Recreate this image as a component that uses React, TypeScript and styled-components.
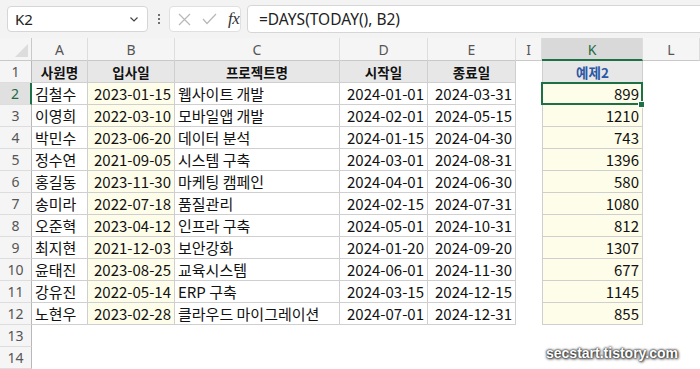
import React from "react";
import styled, { createGlobalStyle, css } from "styled-components";

const GlobalStyle = createGlobalStyle`
  html, body {
    margin: 0;
    padding: 0;
    background: #ffffff;
    overflow: hidden;
  }
  body {
    font-family: "Noto Sans CJK KR", "Noto Sans", sans-serif;
  }
`;

const KR = `"Noto Sans CJK KR", "Noto Sans", sans-serif`;
const UI = `"Noto Sans", "Noto Sans CJK KR", sans-serif`;

const Page = styled.div`
  position: relative;
  width: 700px;
  height: 369px;
  overflow: hidden;
`;

const Toolbar = styled.div`
  display: flex;
  align-items: center;
  height: 38px;
  padding: 0 0 0 7px;
  background: #f3f3f3;
  box-sizing: border-box;
`;

const NameBox = styled.div`
  display: flex;
  align-items: center;
  justify-content: space-between;
  width: 141px;
  height: 26px;
  padding: 0 7px 0 7px;
  box-sizing: border-box;
  background: #ffffff;
  border: 1px solid #d6d6d6;
  border-radius: 4px;
  font-family: ${UI};
  font-size: 15px;
  color: #222;
`;

const Dots = styled.div`
  display: flex;
  flex-direction: column;
  gap: 2px;
  margin: 0 9px 0 10px;
  span {
    width: 2px;
    height: 2px;
    background: #444;
    border-radius: 50%;
  }
`;

const FxBox = styled.div`
  display: flex;
  align-items: center;
  gap: 11px;
  width: 72px;
  height: 26px;
  padding: 0 0 0 8px;
  box-sizing: border-box;
  background: #ffffff;
  border: 1px solid #e0e0e0;
  border-radius: 4px;
`;

const FxLabel = styled.span`
  font-family: "Liberation Serif", serif;
  font-style: italic;
  font-size: 17px;
  color: #333;
  letter-spacing: -0.5px;
`;

const FormulaBox = styled.div`
  display: flex;
  align-items: center;
  flex: 1;
  height: 26px;
  margin: 0 -8px 0 6px;
  padding: 0 0 0 11px;
  background: #ffffff;
  border: 1px solid #d6d6d6;
  border-radius: 4px;
  font-family: ${UI};
  font-size: 15.5px;
  color: #222;
`;

const Sheet = styled.div`
  display: grid;
  grid-template-columns: 32px 56px 87px 165px 88px 88px 26px 101px 1fr;
  grid-template-rows: 23px;
  grid-auto-rows: 22px;
`;

const Corner = styled.div`
  position: relative;
  background: #f5f5f5;
  border-right: 1px solid #c9c9c9;
  border-bottom: 1px solid #c9c9c9;
  box-sizing: border-box;
  &::after {
    content: "";
    position: absolute;
    right: 3px;
    bottom: 3px;
    width: 0;
    height: 0;
    border-left: 13px solid transparent;
    border-bottom: 13px solid #dcdcdc;
  }
`;

const ColHead = styled.div<{ $active?: boolean }>`
  display: flex;
  align-items: center;
  justify-content: center;
  box-sizing: border-box;
  background: ${(p) => (p.$active ? "#d9d9d9" : "#f5f5f5")};
  border-right: 1px solid #dddddd;
  border-bottom: ${(p) => (p.$active ? "2px solid #1e7145" : "1px solid #c9c9c9")};
  font-family: ${UI};
  font-size: 14px;
  padding-top: ${(p) => (p.$active ? "1px" : "0")};
  color: ${(p) => (p.$active ? "#1e6b3f" : "#555")};
`;

const RowHead = styled.div<{ $active?: boolean }>`
  display: flex;
  align-items: center;
  justify-content: center;
  box-sizing: border-box;
  background: ${(p) => (p.$active ? "#e0e0e0" : "#f5f5f5")};
  border-bottom: 1px solid #dddddd;
  border-right: ${(p) => (p.$active ? "2px solid #1e7145" : "1px solid #b8b8b8")};
  font-family: ${UI};
  font-size: 14px;
  color: ${(p) => (p.$active ? "#1e6b3f" : "#555")};
`;

type Fill = "none" | "head" | "yellow";

const Cell = styled.div<{
  $align?: "left" | "right" | "center";
  $fill?: Fill;
  $bordered?: boolean;
  $leftEdge?: boolean;
  $head?: boolean;
  $blue?: boolean;
}>`
  display: flex;
  align-items: center;
  justify-content: ${(p) =>
    p.$align === "right" ? "flex-end" : p.$align === "center" ? "center" : "flex-start"};
  box-sizing: border-box;
  padding: 0 3px 0 3px;
  white-space: nowrap;
  overflow: hidden;
  font-family: ${KR};
  font-size: ${(p) => (p.$head ? "13.5px" : "15px")};
  font-weight: ${(p) => (p.$head ? 700 : 400)};
  color: ${(p) => (p.$blue ? "#2b58a6" : "#111")};
  background: ${(p) =>
    p.$fill === "head" ? "#e7e7e7" : p.$fill === "yellow" ? "#fefde9" : "#ffffff"};
  ${(p) =>
    p.$bordered &&
    css`
      border-right: 1px solid #cfcfcf;
      border-bottom: 1px solid #cfcfcf;
    `}
  ${(p) =>
    p.$leftEdge &&
    css`
      border-left: 1px solid #cfcfcf;
    `}
`;

const Selected = styled(Cell)`
  position: relative;
  overflow: visible;
  &::after {
    content: "";
    position: absolute;
    left: -2px;
    top: -1px;
    right: -1px;
    bottom: -1px;
    border: 2px solid #1e7145;
    pointer-events: none;
  }
  &::before {
    content: "";
    position: absolute;
    right: -3px;
    bottom: -4px;
    width: 5px;
    height: 5px;
    background: #1e7145;
    border: 1px solid #ffffff;
    z-index: 2;
  }
`;

const Watermark = styled.div`
  position: absolute;
  right: 22px;
  bottom: 8px;
  font-family: "Liberation Sans", Arial, sans-serif;
  font-weight: 700;
  font-size: 14px;
  color: #ffffff;
  text-shadow: 0 0 2px #222, 0 0 3px #222, 1px 1px 3px #444;
`;

const columns = ["A", "B", "C", "D", "E", "I", "K", "L"];

const rows: [string, string, string, string, string, number][] = [
  ["김철수", "2023-01-15", "웹사이트 개발", "2024-01-01", "2024-03-31", 899],
  ["이영희", "2022-03-10", "모바일앱 개발", "2024-02-01", "2024-05-15", 1210],
  ["박민수", "2023-06-20", "데이터 분석", "2024-01-15", "2024-04-30", 743],
  ["정수연", "2021-09-05", "시스템 구축", "2024-03-01", "2024-08-31", 1396],
  ["홍길동", "2023-11-30", "마케팅 캠페인", "2024-04-01", "2024-06-30", 580],
  ["송미라", "2022-07-18", "품질관리", "2024-02-15", "2024-07-31", 1080],
  ["오준혁", "2023-04-12", "인프라 구축", "2024-05-01", "2024-10-31", 812],
  ["최지현", "2021-12-03", "보안강화", "2024-01-20", "2024-09-20", 1307],
  ["윤태진", "2023-08-25", "교육시스템", "2024-06-01", "2024-11-30", 677],
  ["강유진", "2022-05-14", "ERP 구축", "2024-03-15", "2024-12-15", 1145],
  ["노현우", "2023-02-28", "클라우드 마이그레이션", "2024-07-01", "2024-12-31", 855],
];

const Chevron = () => (
  <svg width="12" height="12" viewBox="0 0 12 12">
    <path d="M2.5 4.5 L6 8 L9.5 4.5" fill="none" stroke="#444" strokeWidth="1.2" />
  </svg>
);

const Cross = () => (
  <svg width="13" height="13" viewBox="0 0 13 13">
    <path d="M1 1 L12 12 M12 1 L1 12" stroke="#b8b8b8" strokeWidth="1.2" />
  </svg>
);

const Check = () => (
  <svg width="15" height="12" viewBox="0 0 15 12">
    <path d="M1 6 L5 10.5 L14 1" fill="none" stroke="#b8b8b8" strokeWidth="1.2" />
  </svg>
);

export default function App() {
  return (
    <Page>
      <GlobalStyle />
      <Toolbar>
        <NameBox>
          <span>K2</span>
          <Chevron />
        </NameBox>
        <Dots>
          <span />
          <span />
          <span />
        </Dots>
        <FxBox>
          <Cross />
          <Check />
          <FxLabel>fx</FxLabel>
        </FxBox>
        <FormulaBox>=DAYS(TODAY(), B2)</FormulaBox>
      </Toolbar>

      <Sheet>
        <Corner />
        {columns.map((c) => (
          <ColHead key={c} $active={c === "K"}>
            {c}
          </ColHead>
        ))}

        <RowHead>1</RowHead>
        {["사원명", "입사일", "프로젝트명", "시작일", "종료일"].map((h) => (
          <Cell key={h} $align="center" $fill="head" $bordered $head>
            {h}
          </Cell>
        ))}
        <Cell />
        <Cell $align="center" $fill="head" $bordered $leftEdge $head $blue>
          예제2
        </Cell>
        <Cell />

        {rows.map((r, i) => {
          const n = i + 2;
          const K = n === 2 ? Selected : Cell;
          return (
            <React.Fragment key={n}>
              <RowHead $active={n === 2}>{n}</RowHead>
              <Cell $bordered>{r[0]}</Cell>
              <Cell $bordered $fill="yellow" $align="right">
                {r[1]}
              </Cell>
              <Cell $bordered>{r[2]}</Cell>
              <Cell $bordered $align="right">
                {r[3]}
              </Cell>
              <Cell $bordered $align="right">
                {r[4]}
              </Cell>
              <Cell />
              <K $bordered $leftEdge $fill="yellow" $align="right">
                {r[5]}
              </K>
              <Cell />
            </React.Fragment>
          );
        })}

        {[13, 14].map((n) => (
          <React.Fragment key={n}>
            <RowHead>{n}</RowHead>
            {columns.map((c) => (
              <Cell key={c} />
            ))}
          </React.Fragment>
        ))}
      </Sheet>

      <Watermark>secstart.tistory.com</Watermark>
    </Page>
  );
}
